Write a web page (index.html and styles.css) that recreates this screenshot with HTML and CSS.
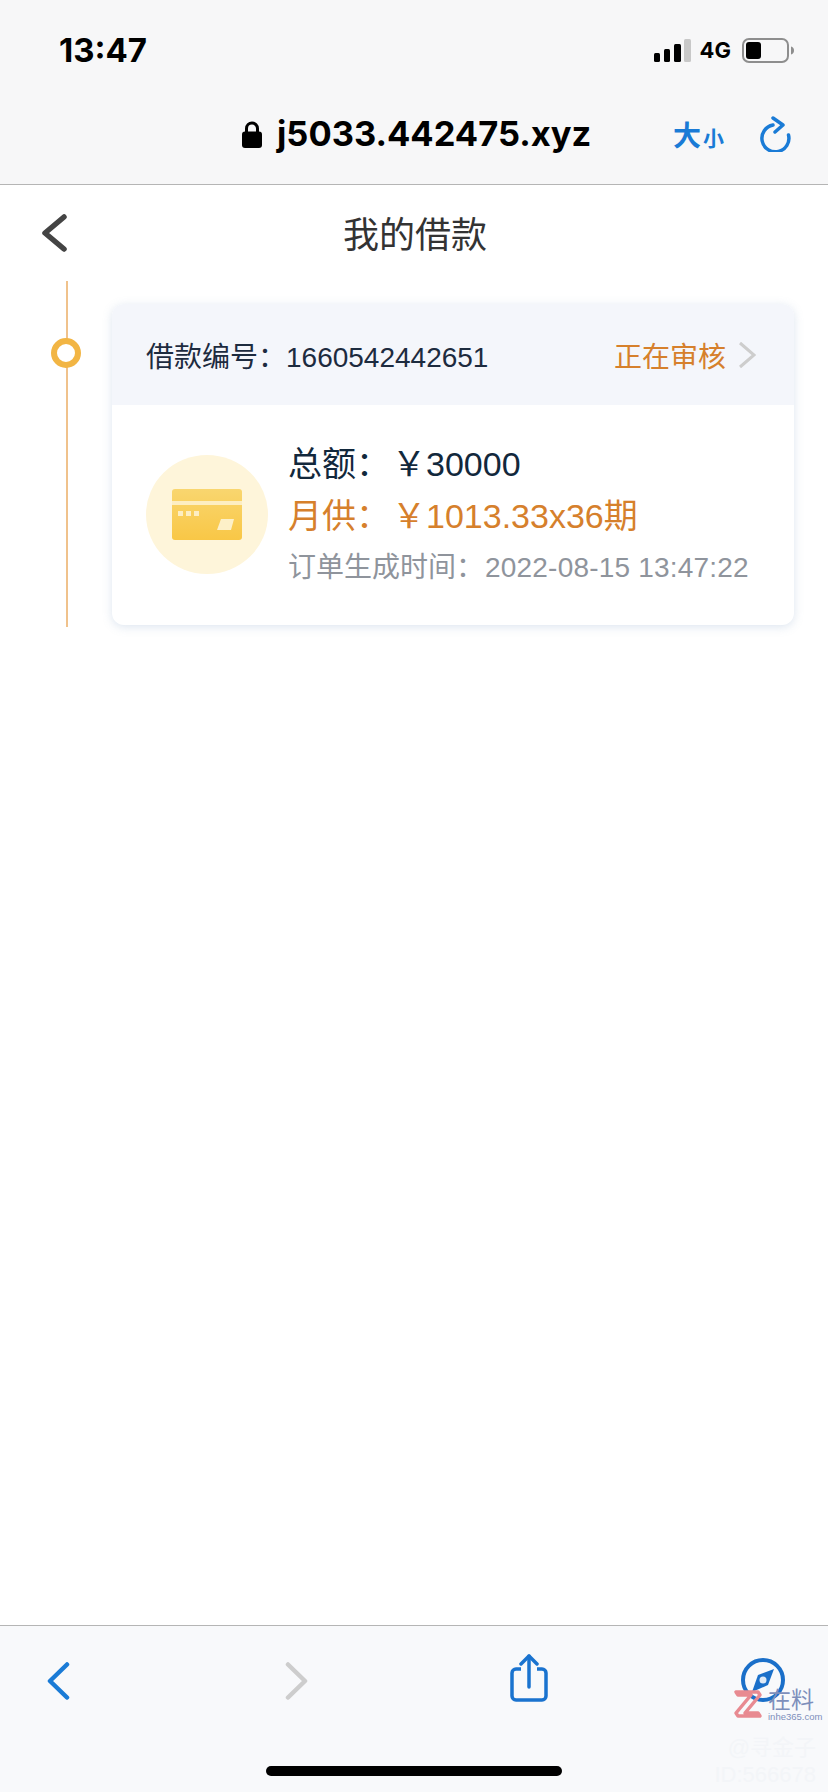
FILE: index.html
```html
<!DOCTYPE html>
<html lang="zh-CN">
<head>
    <meta charset="UTF-8">
    <meta name="viewport" content="width=device-width, initial-scale=1.0">
    <title>我的借款</title>
    <link rel="stylesheet" href="styles.css">
</head>
<body>
    <header class="browser-top">
        <div class="status-bar">
            <span class="clock">13:47</span>
            <div class="status-icons">
                <svg class="signal" width="37" height="23" viewBox="0 0 37 23">
                    <rect x="0" y="14" width="6" height="9" rx="1.5" fill="#000"/>
                    <rect x="10" y="10" width="6" height="13" rx="1.5" fill="#000"/>
                    <rect x="20" y="5" width="7" height="18" rx="1.5" fill="#000"/>
                    <rect x="30" y="0" width="7" height="23" rx="1.5" fill="#c8c8c8"/>
                </svg>
                <span class="network">4G</span>
                <svg class="battery" width="52" height="25" viewBox="0 0 52 25">
                    <rect x="1" y="1" width="45" height="23" rx="6" fill="none" stroke="#8e8e8e" stroke-width="2"/>
                    <rect x="4" y="4" width="15" height="17" rx="3" fill="#000"/>
                    <path d="M49 8.500c2 .6 3 2 3 4s-1 3.400-3 4z" fill="#8e8e8e"/>
                </svg>
            </div>
        </div>
        <div class="url-bar">
            <div class="url">
                <svg class="lock" width="20" height="27" viewBox="0 0 20 27">
                    <path d="M4.500 12V7.500a5.500 5.500 0 0 1 11 0V12" fill="none" stroke="#000" stroke-width="3"/>
                    <rect x="0" y="10.500" width="20" height="16.500" rx="3" fill="#000"/>
                </svg>
                <span class="domain">j5033.442475.xyz</span>
            </div>
            <div class="url-actions">
                <span class="text-size"><b>大</b><small>小</small></span>
                <svg class="reload" width="32" height="36" viewBox="0 0 32 36">
                    <path d="M13 9A13.500 13.500 0 1 0 28.500 19" fill="none" stroke="#1a7bd6" stroke-width="3.500" stroke-linecap="round"/>
                    <path d="M13 2l10 7-8 7" fill="none" stroke="#1a7bd6" stroke-width="3.500" stroke-linecap="round" stroke-linejoin="round"/>
                </svg>
            </div>
        </div>
    </header>

    <main class="page">
        <div class="page-title">
            <svg class="back" width="26" height="38" viewBox="0 0 26 38">
                <path d="M23 3L4 19l19 16" fill="none" stroke="#444" stroke-width="5.500" stroke-linecap="round" stroke-linejoin="round"/>
            </svg>
            <h1>我的借款</h1>
        </div>

        <div class="loan-list">
            <div class="loan-item">
                <span class="loan-dot"></span>
                <div class="loan-card">
                    <div class="loan-head">
                        <span class="loan-no">借款编号：1660542442651</span>
                        <span class="loan-state">正在审核
                            <svg width="18" height="28" viewBox="0 0 18 28">
                                <path d="M2 2l14 12L2 26" fill="none" stroke="#cdcdcd" stroke-width="3"/>
                            </svg>
                        </span>
                    </div>
                    <div class="loan-body">
                        <div class="loan-icon">
                            <svg width="70" height="51" viewBox="0 0 70 51">
                                <defs>
                                    <linearGradient id="cardFill" x1="0" y1="0" x2="0" y2="1">
                                        <stop offset="0" stop-color="#f9d66f"/>
                                        <stop offset="1" stop-color="#f9c746"/>
                                    </linearGradient>
                                </defs>
                                <rect width="70" height="51" rx="3" fill="url(#cardFill)"/>
                                <rect y="12" width="70" height="4" fill="#fdeec2"/>
                                <rect x="6" y="22" width="5" height="5" fill="#fdeec2"/>
                                <rect x="14" y="22" width="5" height="5" fill="#fdeec2"/>
                                <rect x="22" y="22" width="5" height="5" fill="#fdeec2"/>
                                <path d="M49 30h13l-3 11H45z" fill="#fdf0c8"/>
                            </svg>
                        </div>
                        <div class="loan-info">
                            <p class="loan-total"><span class="label">总额：</span>￥30000</p>
                            <p class="loan-month"><span class="label">月供：</span>￥1013.33x36期</p>
                            <p class="loan-time"><span class="label-time">订单生成时间：</span><span class="stamp">2022-08-15 13:47:22</span></p>
                        </div>
                    </div>
                </div>
            </div>
        </div>
    </main>

    <footer class="browser-bottom">
        <div class="toolbar">
            <svg class="tool-chevron" width="24" height="38" viewBox="0 0 24 38">
                <path d="M20 2.500L3 19l17 16.500" fill="none" stroke="#1a7bd6" stroke-width="4.500" stroke-linecap="round" stroke-linejoin="round"/>
            </svg>
            <svg class="tool-chevron" width="24" height="38" viewBox="0 0 24 38">
                <path d="M3 2.500L20 19 3 35.500" fill="none" stroke="#cdcdcd" stroke-width="4.500" stroke-linecap="round" stroke-linejoin="round"/>
            </svg>
            <svg width="38" height="48" viewBox="0 0 38 48">
                <path d="M11 15H6a4 4 0 0 0-4 4v23a4 4 0 0 0 4 4h26a4 4 0 0 0 4-4V19a4 4 0 0 0-4-4h-5" fill="none" stroke="#1a73cf" stroke-width="3.500"/>
                <path d="M19 2v31" stroke="#1a73cf" stroke-width="3.500" stroke-linecap="round"/>
                <path d="M11 10l8-8 8 8" fill="none" stroke="#1a73cf" stroke-width="3.500" stroke-linecap="round" stroke-linejoin="round"/>
            </svg>
            <svg class="tool-compass" width="44" height="44" viewBox="0 0 44 44">
                <circle cx="22" cy="22" r="20" fill="none" stroke="#1a6fc9" stroke-width="4"/>
                <path d="M33 11L27 27 11 34 17 17z" fill="#1a6fc9"/>
                <circle cx="22" cy="22" r="3.500" fill="#dfeaf6"/>
            </svg>
        </div>
        <div class="home-bar"></div>
        <div class="watermark">
            <svg class="wm-logo" width="30" height="30" viewBox="0 0 30 30">
                <path d="M9 3H25L27 6 12 24H25L27 27H5L3 24 18 6H5L3 3z" fill="none" stroke="#e88a91" stroke-width="3.500" stroke-linejoin="round"/>
            </svg>
            <div class="wm-text">
                <span class="wm-name">在料</span>
                <span class="wm-site">inhe365.com</span>
            </div>
        </div>
        <div class="wm-faint">
            <span>@寻金子</span>
            <span>ID:566678</span>
        </div>
    </footer>
</body>
</html>
```

FILE: styles.css
```css
* {
    box-sizing: border-box;
}
body {
    margin: 0;
    height: 1792px;
    display: flex;
    flex-direction: column;
    background-color: #fff;
    font-family: "Liberation Sans", "Noto Sans CJK SC", sans-serif;
    overflow: hidden;
}
p, h1 {
    margin: 0;
    font-weight: normal;
}

/* browser chrome, top */
.browser-top {
    height: 185px;
    background-color: #f7f7f8;
    border-bottom: 1px solid #b5b5b5;
}
.status-bar {
    height: 98px;
    padding: 37px 34px 0 59px;
    display: flex;
    justify-content: space-between;
    align-items: flex-start;
}
.clock {
    font-family: Inter, "Liberation Sans", sans-serif;
    font-size: 33px;
    line-height: 26px;
    font-weight: 700;
    color: #000;
}
.status-icons {
    display: flex;
    align-items: center;
    gap: 9px;
}
.network {
    font-family: Inter, "Liberation Sans", sans-serif;
    font-size: 22px;
    font-weight: 700;
    color: #000;
    margin-right: 2px;
}
.url-bar {
    height: 86px;
    padding: 18px 36px 0 242px;
    display: flex;
    justify-content: space-between;
    align-items: flex-start;
}
.url {
    display: flex;
    align-items: center;
    gap: 15px;
}
.domain {
    font-family: Inter, "Liberation Sans", sans-serif;
    font-size: 34.5px;
    line-height: 36px;
    font-weight: 700;
    color: #000;
}
.url-actions {
    display: flex;
    align-items: flex-start;
    gap: 36px;
}
.text-size {
    color: #1a7bd6;
    font-family: "Noto Sans CJK SC", sans-serif;
    white-space: nowrap;
    line-height: 28px;
    margin-top: 4px;
}
.text-size b {
    font-size: 28px;
}
.text-size small {
    font-size: 21px;
    font-weight: 700;
    margin-left: 2px;
}

/* page */
.page {
    flex: 1;
}
.page-title {
    position: relative;
    height: 96px;
    padding: 0 0 2px 2px;
    display: flex;
    justify-content: center;
    align-items: center;
}
.page-title h1 {
    font-size: 36px;
    color: #333;
}
.back {
    position: absolute;
    left: 41px;
    top: 29px;
}
.loan-list {
    padding-left: 66px;
}
.loan-item {
    position: relative;
    border-left: 2px solid #f0c28c;
    padding: 23px 34px 1px 44px;
    height: 346px;
}
.loan-dot {
    position: absolute;
    left: -17px;
    top: 57px;
    width: 30px;
    height: 30px;
    border: 6px solid #f2b544;
    border-radius: 50%;
    background-color: #fff;
}
.loan-card {
    border-radius: 12px;
    background-color: #fff;
    overflow: hidden;
    box-shadow: 0 2px 10px rgba(120, 150, 190, 0.25);
}
.loan-head {
    height: 101px;
    padding: 0 38px 0 34px;
    background-color: #f4f6fb;
    display: flex;
    justify-content: space-between;
    align-items: center;
    font-size: 28px;
}
.loan-no {
    color: #1d2b3f;
}
.loan-state {
    color: #d6802c;
    display: flex;
    align-items: center;
    gap: 12px;
}
.loan-body {
    height: 220px;
    padding: 50px 0 0 34px;
    display: flex;
    align-items: flex-start;
    gap: 20px;
}
.loan-icon {
    flex: none;
    width: 122px;
    height: 119px;
    border-radius: 50%;
    background-color: #fef5da;
    display: flex;
    justify-content: center;
    align-items: center;
}
.loan-info {
    margin-top: -17px;
    white-space: nowrap;
}
.loan-total, .loan-month {
    font-size: 34px;
    line-height: 52px;
}
.label {
    margin-right: 2px;
}
.loan-total {
    color: #12283c;
}
.loan-month {
    color: #d6802c;
}
.loan-time {
    font-size: 28px;
    line-height: 52px;
    color: #8f949c;
}
.label-time {
    margin-right: 1px;
}
.stamp {
    letter-spacing: 0.2px;
}

/* browser chrome, bottom */
.browser-bottom {
    position: relative;
    height: 167px;
    background-color: #f8f9fb;
    border-top: 1px solid #b5b5b5;
}
.toolbar {
    height: 140px;
    padding: 28px 0 0 47px;
    display: grid;
    grid-template-columns: 238px 225px 231px 44px;
    align-items: start;
}
.tool-chevron {
    margin-top: 8px;
}
.tool-compass {
    margin-top: 4px;
}
.home-bar {
    width: 296px;
    height: 10px;
    margin-left: 266px;
    border-radius: 5px;
    background-color: #000;
}
.watermark {
    position: absolute;
    left: 733px;
    top: 63px;
    display: flex;
    gap: 5px;
}
.wm-text {
    display: flex;
    flex-direction: column;
    line-height: 1;
}
.wm-name {
    font-size: 23px;
    color: #7e8fbb;
}
.wm-site {
    font-size: 9.5px;
    color: #7e8fbb;
}
.wm-faint {
    position: absolute;
    right: 12px;
    top: 108px;
    display: flex;
    flex-direction: column;
    align-items: flex-end;
    font-size: 22px;
    line-height: 27px;
    color: #f3f5f8;
}
```
